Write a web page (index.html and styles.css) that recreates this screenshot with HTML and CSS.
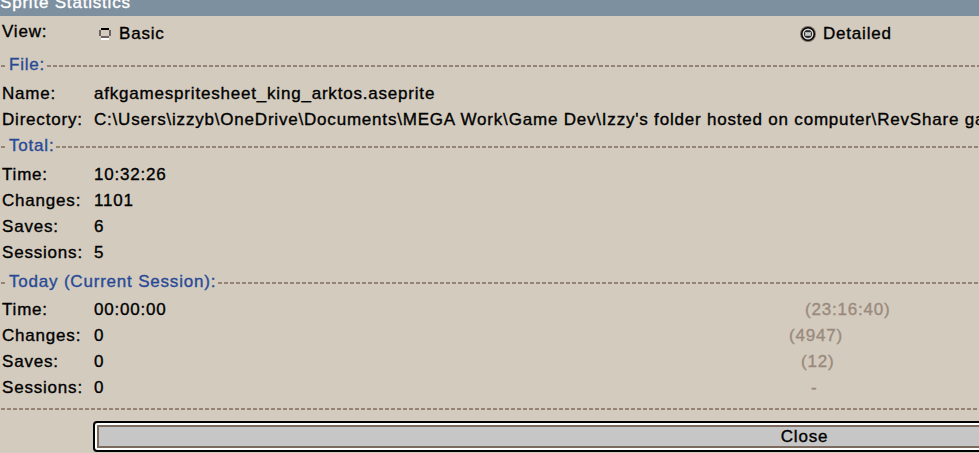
FILE: index.html
```html
<!DOCTYPE html>
<html>
<head>
<meta charset="utf-8">
<title>Sprite Statistics</title>
<link rel="stylesheet" href="styles.css">
</head>
<body>
<div class="window">
  <div class="titlebar"><span class="title">Sprite Statistics</span></div>
  <div class="content">
    <div class="view-row">
      <span class="label">View:</span>
      <span class="option">
        <svg class="radio" width="12" height="12" viewBox="0 0 12 12">
          <rect x="2" y="0" width="8" height="2" fill="#000"/>
          <rect x="0" y="2" width="2" height="6" fill="#6e6264"/>
          <rect x="10" y="2" width="2" height="6" fill="#6e6264"/>
          <rect x="2" y="8" width="8" height="2" fill="#6e6264"/>
          <rect x="2" y="10" width="8" height="2" fill="#fff"/>
        </svg>
        <span>Basic</span>
      </span>
      <span class="option">
        <svg class="radio radio-on" width="16" height="16" viewBox="0 0 16 16">
          <circle cx="8" cy="8" r="8" fill="#7a6a5e"/>
          <circle cx="8" cy="8" r="7" fill="#000"/>
          <circle cx="8" cy="8" r="5.5" fill="#d6d6d6"/>
          <circle cx="8" cy="8" r="4" fill="#2a2a2a"/>
          <rect x="5" y="6" width="6" height="4" fill="#a9a9a9"/>
          <rect x="6" y="7" width="4" height="2" fill="#c8c8c8"/>
        </svg>
        <span>Detailed</span>
      </span>
    </div>

    <div class="sep sep-first"><span class="dash-lead"></span><span class="sep-label">File:</span><span class="dash-fill"></span></div>
    <div class="stats">
      <span class="label">Name:</span><span class="value wide">afkgamespritesheet_king_arktos.aseprite</span>
      <span class="label">Directory:</span><span class="value wide">C:\Users\izzyb\OneDrive\Documents\MEGA Work\Game Dev\Izzy's folder hosted on computer\RevShare games\King Arktos</span>
    </div>

    <div class="sep"><span class="dash-lead"></span><span class="sep-label">Total:</span><span class="dash-fill"></span></div>
    <div class="stats">
      <span class="label">Time:</span><span class="value wide">10:32:26</span>
      <span class="label">Changes:</span><span class="value wide">1101</span>
      <span class="label">Saves:</span><span class="value wide">6</span>
      <span class="label">Sessions:</span><span class="value wide">5</span>
    </div>

    <div class="sep sep-today"><span class="dash-lead"></span><span class="sep-label">Today (Current Session):</span><span class="dash-fill"></span></div>
    <div class="stats">
      <span class="label">Time:</span><span class="value">00:00:00</span><span class="muted m-time">(23:16:40)</span>
      <span class="label">Changes:</span><span class="value">0</span><span class="muted m-changes">(4947)</span>
      <span class="label">Saves:</span><span class="value">0</span><span class="muted m-saves">(12)</span>
      <span class="label">Sessions:</span><span class="value">0</span><span class="muted m-sessions">-</span>
    </div>

    <div class="sep-line"></div>

    <div class="footer">
      <div class="button">Close</div>
    </div>
  </div>
</div>
</body>
</html>
```
FILE: styles.css
```css
html, body {
  margin: 0;
  padding: 0;
}
body {
  width: 979px;
  height: 453px;
  overflow: hidden;
  background: #d3cbbe;
  font-family: "Liberation Sans", Arial, sans-serif;
  font-size: 17px;
  letter-spacing: 0.8px;
  color: #000;
  -webkit-text-stroke: 0.35px currentColor;
}
.window {
  width: 979px;
}
.titlebar {
  height: 16px;
  background: #7d90a0;
  overflow: hidden;
}
.title {
  display: block;
  color: #fff;
  line-height: 6px;
  padding-left: 0;
  white-space: nowrap;
}
.content {
  padding: 3px 0 0 2px;
}
.view-row {
  display: grid;
  grid-template-columns: 92px 703px auto;
  height: 26px;
  line-height: 26px;
}
.option {
  display: flex;
  align-items: center;
  gap: 8px;
  padding-left: 5px;
  padding-top: 2px;
  height: 26px;
  white-space: nowrap;
}
.radio {
  display: block;
  flex: none;
}
.radio-on {
  margin-left: -2px;
  margin-right: -1px;
}
.sep {
  display: flex;
  align-items: center;
  height: 26px;
  line-height: 26px;
  margin: 0 0 3px -1px;
}
.sep-first {
  margin-top: 7px;
}
.sep-today {
  margin-top: 3px;
  margin-bottom: 2px;
}
.dash-lead,
.dash-fill,
.sep-line {
  height: 2px;
  background: repeating-linear-gradient(90deg, #938375 0 4px, transparent 4px 6px);
}
.dash-lead {
  width: 5px;
  margin-top: 1px;
}
.dash-fill {
  flex: 1;
  margin-top: 1px;
}
.sep-label {
  color: #284a96;
  margin: 0 2px 0 3px;
  white-space: nowrap;
}
.stats {
  display: grid;
  grid-template-columns: 92px 695px 1fr;
  grid-auto-rows: 26px;
  line-height: 26px;
}
.label {
  white-space: nowrap;
}
.value {
  white-space: nowrap;
  min-width: 0;
}
.value.wide {
  grid-column: span 2;
}
.muted {
  color: #9a8a7d;
  white-space: nowrap;
}
.m-time { padding-left: 16px; }
.m-changes { padding-left: 0; }
.m-saves { padding-left: 12px; }
.m-sessions { padding-left: 22px; }
.sep-line {
  margin: 7px 0 0 -1px;
}
.footer {
  padding: 11px 0 0 91px;
}
.button {
  box-sizing: border-box;
  width: 1423px;
  height: 31px;
  border: 2px solid #000;
  border-radius: 4px;
  background: #c6c6c6;
  box-shadow: inset 0 0 0 2px #fff, inset 0 0 0 4px #7b6a5d;
  display: flex;
  align-items: center;
  justify-content: center;
  line-height: 1;
}
```
